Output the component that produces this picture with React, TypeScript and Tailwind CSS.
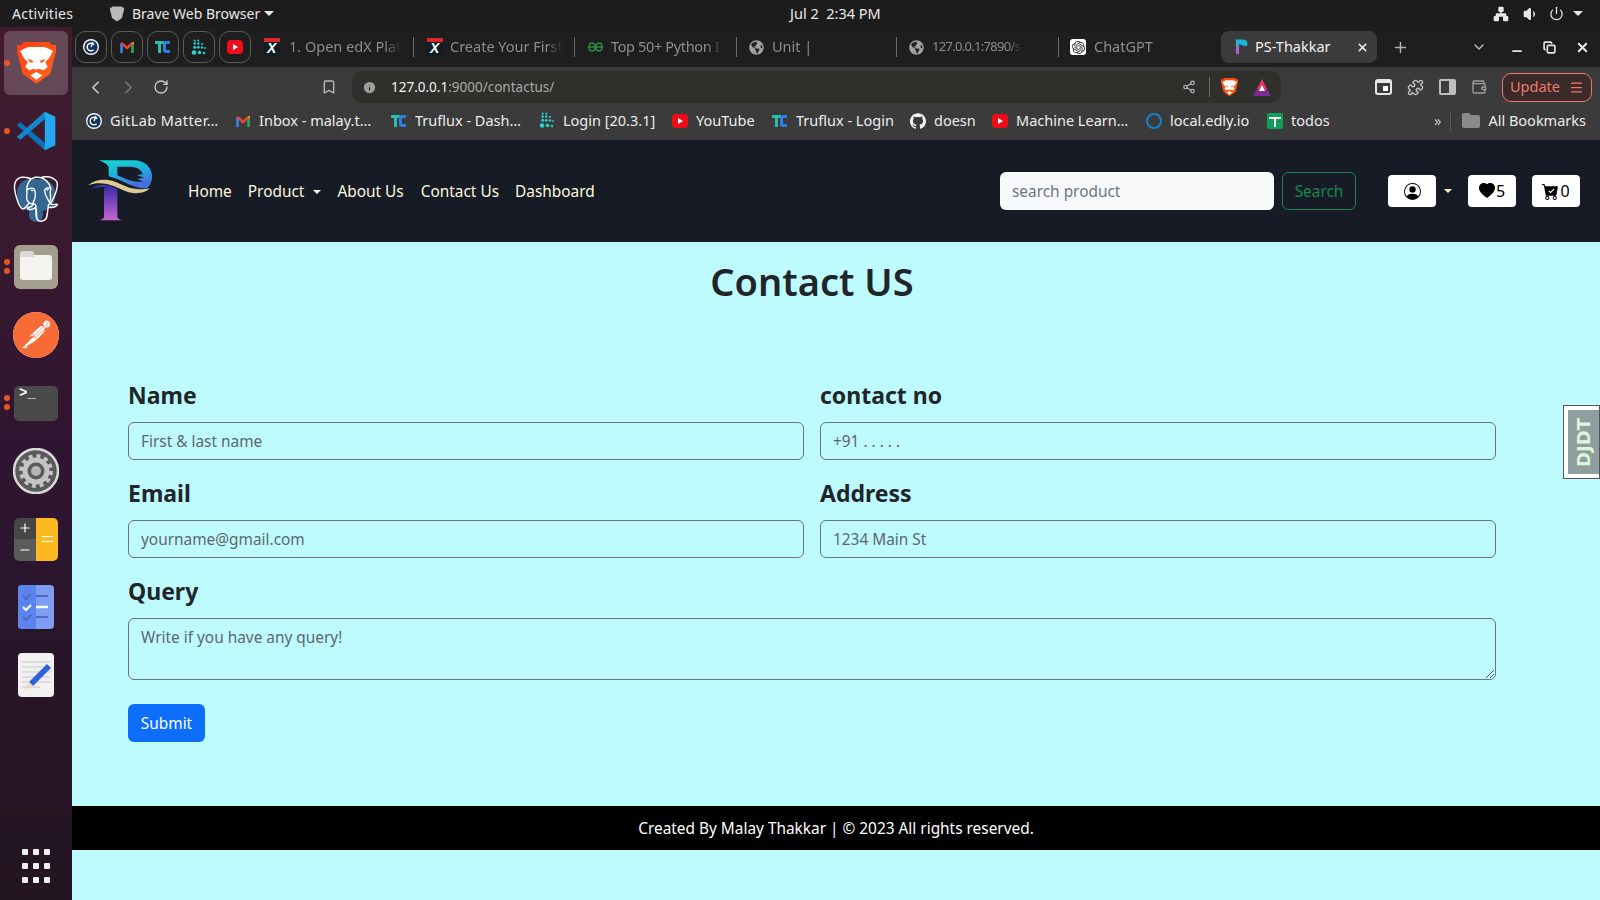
import { ChevronDown, ChevronLeft, ChevronRight, Copy, Minus, Plus, RotateCw, Share2, X, Bookmark, Info, Puzzle, Volume1, Power, Network, Wallet, Menu } from 'lucide-react';
import { SiGithub, SiPostgresql, SiPostman, SiOpenai } from 'react-icons/si';
import { FaGlobeAmericas } from 'react-icons/fa';
import { BsCartCheckFill, BsHeartFill, BsPersonCircle } from 'react-icons/bs';

function BraveMark({ size = 20 }: { size?: number }) {
  return (
    <svg width={size} height={(size * 125) / 117} viewBox="0 0 117 125">
      <defs>
        <linearGradient id="brv" x1="0" y1="0" x2="1" y2="1">
          <stop offset="0" stopColor="#ff3d12" />
          <stop offset="1" stopColor="#ff6a1a" />
        </linearGradient>
      </defs>
      <path d="M20 0H97L105 10 117 8V30L110 55 100 95 58 125 17 95 7 55 0 30V8L12 10Z" fill="url(#brv)" />
      <path d="M18 22L35 15H82L99 22 108 27 95 50 85 60 92 75 80 85 65 80 58 83 51 80 37 85 25 75 32 60 22 50 9 27Z" fill="#fff" />
      <path d="M32 50L48 56 46 63 38 60ZM85 50L69 56 71 63 79 60Z" fill="#ff5a1f" />
      <path d="M40 100L58 90 76 100 58 113Z" fill="#fff" />
    </svg>
  );
}

function VsCodeMark() {
  return (
    <svg width="42" height="42" viewBox="0 0 100 100">
      <path d="M4 36l9-7 60 51-2 16-18-16z" fill="#0a72b8" />
      <path d="M4 64l9 7L73 20 71 4 53 20z" fill="#1685d0" />
      <path d="M71 4l25 12v68L71 96z" fill="#23a9f2" />
    </svg>
  );
}

function PsLogo() {
  return (
    <svg width="66" height="64" viewBox="24 24 198 192">
      <defs>
        <linearGradient id="top" x1="0" y1="0" x2="0.4" y2="1">
          <stop offset="0" stopColor="#12dcd0" />
          <stop offset="0.5" stopColor="#1fb4dc" />
          <stop offset="1" stopColor="#4470e0" />
        </linearGradient>
        <linearGradient id="stem" x1="0" y1="0" x2="0" y2="1">
          <stop offset="0" stopColor="#3c2fa8" />
          <stop offset="1" stopColor="#c766d2" />
        </linearGradient>
      </defs>
      <path d="M57 28H160C195 28 216 50 216 76 216 95 209 106 200 112 175 114 145 100 112 84L86 76V48Q82 38 57 28Z" fill="url(#top)" />
      <path d="M112 47H150C172 47 185 58 188 70L170 72 192 80 172 84 190 92 170 92C150 90 125 80 112 72Z" fill="#161b26" />
      <path d="M72 110C85 108 100 108 112 115V198Q114 205 128 208H57Q70 205 72 198Z" fill="url(#stem)" />
      <path d="M32 114C55 96 85 100 112 114 85 106 60 106 32 114Z" fill="#3a3ab5" />
      <path d="M25 103C45 85 75 82 105 92 130 102 160 122 210 112 195 128 160 132 130 118 100 102 60 88 25 103Z" fill="#dccb92" />
    </svg>
  );
}

function PinnedTab({ children }: { children: React.ReactNode }) {
  return (
    <div className="flex h-8 w-8 items-center justify-center rounded-[10px] border border-[#5a5a5a]">{children}</div>
  );
}

function GitLabFav() {
  return (
    <svg width="16" height="16" viewBox="0 0 16 16">
      <circle cx="8" cy="8" r="8" fill="#f4f6f8" />
      <circle cx="8" cy="8" r="6.6" fill="#15305c" />
      <circle cx="8" cy="8" r="3.8" fill="none" stroke="#fff" strokeWidth="1.5" strokeDasharray="18 6" strokeDashoffset="-3" />
      <path d="M8 8l2-5" stroke="#fff" strokeWidth="1.4" />
    </svg>
  );
}

function GmailFav() {
  return (
    <svg width="14" height="12" viewBox="0 0 14 12" fill="none">
      <path d="M1.5 12V2" stroke="#3b82f6" strokeWidth="2.6" />
      <path d="M12.5 12V2" stroke="#22a95c" strokeWidth="2.6" />
      <path d="M1.5 2L7 7l5.5-5" stroke="#ea4335" strokeWidth="2.6" />
      <path d="M12.5 1.5l1.2 1" stroke="#fbbc05" strokeWidth="2" />
    </svg>
  );
}

function TrufluxFav() {
  return (
    <svg width="16" height="14" viewBox="0 0 16 14">
      <path d="M0 1h9v3H6v9H3V4H0z" fill="#28bfa8" />
      <path d="M15 1v3h-3c-1 0-1 1-1 1v4s0 1 1 1h3v3h-4c-2 0-3-1-3-3V4c0-2 1-3 3-3z" fill="#2f7ee6" />
    </svg>
  );
}

function DotsFav() {
  const dots = [
    [3.7, 1.5, 1.1], [7.3, 1.5, 1.1],
    [3.7, 4.5, 1.3], [7.3, 4.5, 1.2], [11, 5, 1],
    [3.7, 8.3, 1.5], [7.3, 8.3, 1.4], [11, 8.5, 1.2], [14, 9, 0.9],
    [3, 13.5, 2.3], [8.5, 13.5, 1.8], [13, 14, 1.3],
  ];
  return (
    <svg width="16" height="17" viewBox="0 0 16 17">
      {dots.map(([x, y, r]) => <circle key={`${x}-${y}`} cx={x} cy={y} r={r} fill="#22d3d0" />)}
    </svg>
  );
}

function YoutubeFav() {
  return (
    <div className="flex h-[14px] w-4 items-center justify-center rounded-[4px] bg-[#f00c18]">
      <div className="h-0 w-0 border-y-[3px] border-l-[5px] border-y-transparent border-l-white" />
    </div>
  );
}

function EdxFav() {
  return (
    <div className="relative h-[18px] w-[16px] bg-[#0d1f24]">
      <div className="h-1 w-full bg-[#e0262e]" />
      <span className="absolute left-[3px] top-[3px] font-['Liberation_Sans',sans-serif] text-[14px] font-bold italic leading-[15px] text-white">X</span>
    </div>
  );
}

function TabTitle({ w, children }: { w: string; children: React.ReactNode }) {
  return (
    <span className={`overflow-hidden whitespace-nowrap text-[#8d8d8d] [mask-image:linear-gradient(to_right,black_85%,transparent)] ${w}`}>
      {children}
    </span>
  );
}

function TopBar() {
  return (
    <div className="flex h-[27px] items-center bg-[#1c1c1c] text-[14px] text-[#e8e8e8]">
      <span className="ml-3 w-[98px] tracking-[0.3px]">Activities</span>
      <svg width="14" height="16" viewBox="0 0 117 125" className="mr-2">
        <path d="M20 0H97L105 10 117 8V30L110 55 100 95 58 125 17 95 7 55 0 30V8L12 10Z" fill="#b9b9b9" />
      </svg>
      <span className="w-[132px]">Brave Web Browser</span>
      <span className="h-0 w-0 border-x-[5px] border-t-[5px] border-x-transparent border-t-[#e8e8e8]" />
      <span className="ml-[516px] whitespace-pre text-[14.5px]">Jul 2  2:34 PM</span>
      <div className="ml-auto mr-[17px] flex items-center gap-[12px]">
        <Network size={16} fill="#e8e8e8" />
        <Volume1 size={16} fill="#e8e8e8" className="ml-[2px]" />
        <Power size={15} className="-ml-[2px]" />
        <span className="-ml-[3px] h-0 w-0 border-x-[5px] border-t-[5px] border-x-transparent border-t-[#e8e8e8]" />
      </div>
    </div>
  );
}

function Dock() {
  const item = 'relative flex h-[68px] items-center justify-center';
  const dot = 'absolute left-[4px] h-[6px] w-[6px] rounded-full bg-[#e95420]';
  return (
    <div className="flex h-full w-[72px] shrink-0 flex-col bg-gradient-to-b from-[#421c2d] via-[#2e1531] to-[#231520] pt-[2px]">
      <div className={item}>
        <div className="flex h-[64px] w-[64px] items-center justify-center rounded-[6px] bg-white/20"><BraveMark size={39} /></div>
        <span className={`${dot} top-[31px]`} />
      </div>
      <div className={item}>
        <VsCodeMark />
        <span className={`${dot} top-[31px]`} />
      </div>
      <div className={item}>
        <div className="relative flex h-[46px] w-[46px] items-center justify-center">
          <div className="absolute left-[4px] top-[3px] h-[32px] w-[38px] rounded-[14px] bg-[#336791]" />
          <div className="absolute left-[16px] top-[24px] h-[22px] w-[14px] rounded-b-[7px] bg-[#336791]" />
          <SiPostgresql size={46} color="#fff" className="relative" />
        </div>
      </div>
      <div className={item}>
        <div className="flex h-[44px] w-[44px] items-center justify-center rounded-[6px] bg-[#a39e8d]">
          <div className="relative h-[25px] w-[32px] rounded-[3px] bg-[#f5f3f0] before:absolute before:-top-[4px] before:left-0 before:h-[6px] before:w-[14px] before:rounded-t-[3px] before:bg-[#ddd9d2]" />
        </div>
        <span className={`${dot} top-[26px]`} />
        <span className={`${dot} top-[35px]`} />
      </div>
      <div className={item}>
        <div className="flex h-[46px] w-[46px] items-center justify-center rounded-full bg-white">
          <SiPostman size={46} color="#f76b36" />
        </div>
      </div>
      <div className={item}>
        <div className="h-[35px] w-[44px] rounded-[5px] bg-[#4a4a4a] pl-[5px] font-['Liberation_Mono',monospace] text-[14px] font-bold leading-[14px] text-white">&gt;_</div>
        <span className={`${dot} top-[26px]`} />
        <span className={`${dot} top-[35px]`} />
      </div>
      <div className={item}>
        <svg width="46" height="46" viewBox="0 0 46 46">
          <circle cx="23" cy="23" r="22" fill="#5a5a5a" stroke="#d9d9d9" strokeWidth="2.5" />
          <circle cx="23" cy="23" r="11" fill="none" stroke="#c4c4c4" strokeWidth="5" />
          <circle cx="23" cy="23" r="15" fill="none" stroke="#c4c4c4" strokeWidth="4" strokeDasharray="4 3.85" />
          <circle cx="23" cy="23" r="5" fill="#b5b5b5" />
        </svg>
      </div>
      <div className={item}>
        <div className="grid h-[43px] w-[44px] grid-cols-2 grid-rows-2 overflow-hidden rounded-[5px]">
          <div className="flex items-center justify-center bg-[#464646]"><Plus size={14} color="#fff" /></div>
          <div className="row-span-2 flex flex-col items-center justify-center gap-[4px] bg-[#fdb921]">
            <div className="h-px w-[11px] bg-white" />
            <div className="h-px w-[11px] bg-white" />
          </div>
          <div className="flex items-center justify-center bg-[#5a5a5a]"><Minus size={14} color="#fff" /></div>
        </div>
      </div>
      <div className={item}>
        <svg width="36" height="44" viewBox="0 0 36 44">
          <rect width="36" height="44" rx="4" fill="#7e9ef5" />
          <path d="M0 4a4 4 0 0 1 4-4h14v44H4a4 4 0 0 1-4-4z" fill="#5b84ef" />
          <path d="M5 11l3 3 5-5M5 32l3 3 5-5" stroke="#4a6cc4" strokeWidth="2" fill="none" />
          <path d="M5 22l3 3 5-5" stroke="#fff" strokeWidth="2" fill="none" />
          <path d="M18 11h12M18 32h12" stroke="#4a6cc4" strokeWidth="2" />
          <path d="M18 22h12" stroke="#fff" strokeWidth="2.4" />
        </svg>
      </div>
      <div className={item}>
        <svg width="36" height="44" viewBox="0 0 36 44">
          <rect width="36" height="44" rx="4" fill="#f1f1f1" />
          <path d="M4 9h28M4 14h28M4 19h28M4 24h28M4 29h28M4 34h18" stroke="#c9c9c9" />
          <path d="M11 29L29 11l4 4-18 18z" fill="#2d62d9" />
          <path d="M11 29l4 4-8 4z" fill="#f5d9b8" />
        </svg>
      </div>
      <div className="mt-auto mb-[17px] grid w-full grid-cols-3 justify-items-center gap-y-[8px] px-[20px]">
        {Array.from({ length: 9 }).map((_, i) => (
          <span key={i} className="h-[6px] w-[6px] rounded-[1px] bg-[#f0f0f0]" />
        ))}
      </div>
    </div>
  );
}

function TabStrip() {
  return (
    <div className="flex h-[40px] items-center bg-[#1e1e1e] pl-[3px] text-[14.5px]">
      <div className="flex gap-[4px]">
        <PinnedTab><GitLabFav /></PinnedTab>
        <PinnedTab><GmailFav /></PinnedTab>
        <PinnedTab><TrufluxFav /></PinnedTab>
        <PinnedTab><DotsFav /></PinnedTab>
        <PinnedTab><YoutubeFav /></PinnedTab>
      </div>
      <div className="ml-[10px] flex h-5 w-[153px] items-center gap-[9px] border-r border-[#6a6a6a] pl-[3px]">
        <EdxFav />
        <TabTitle w="w-[112px]">1. Open edX Plat</TabTitle>
      </div>
      <div className="flex h-5 w-[161px] items-center gap-[7px] border-r border-[#6a6a6a] pl-[13px]">
        <EdxFav />
        <TabTitle w="w-[113px]">Create Your First</TabTitle>
      </div>
      <div className="flex h-5 w-[162px] items-center gap-[8px] border-r border-[#6a6a6a] pl-[13px]">
        <svg width="15" height="10" viewBox="0 0 15 10" fill="none" stroke="#2f8d46" strokeWidth="1.4">
          <path d="M0 5h15M7.5 5C7 2 5 1 3.5 1 2 1 1 2.5 1 5s1.5 4 3 4 3-1.5 3.5-4zM7.5 5C8 2 10 1 11.500 1 13 1 14 2.500 14 5s-1.500 4-3 4-3-1.500-3.500-4z" />
        </svg>
        <TabTitle w="w-[112px] tracking-[-0.35px]">Top 50+ Python I</TabTitle>
      </div>
      <div className="flex h-5 w-[160px] items-center gap-[8px] border-r border-[#6a6a6a] pl-[12px]">
        <FaGlobeAmericas size={15} color="#a0a0a0" />
        <TabTitle w="w-[100px]">Unit |</TabTitle>
      </div>
      <div className="flex h-5 w-[162px] items-center gap-[8px] border-r border-[#6a6a6a] pl-[12px]">
        <FaGlobeAmericas size={15} color="#a0a0a0" />
        <TabTitle w="w-[90px] text-[13px] tracking-[-0.7px]">127.0.0.1:7890/sc</TabTitle>
      </div>
      <div className="flex h-5 w-[162px] items-center gap-[8px] pl-[11px]">
        <div className="flex h-[16px] w-[16px] items-center justify-center rounded-[3px] bg-white"><SiOpenai size={13} color="#333" /></div>
        <TabTitle w="w-[100px]">ChatGPT</TabTitle>
      </div>
      <div className="flex h-8 w-[156px] items-center rounded-[8px] bg-[#3b3b3b] pl-[11px] pr-[8px] text-[#f0f0f0]">
        <svg width="16" height="16" viewBox="24 24 198 192" className="mr-[7px]">
          <path d="M57 28H160C195 28 216 50 216 76 216 95 209 106 200 112 175 114 145 100 112 84V120H72V48Q82 38 57 28Z" fill="#1fb4dc" />
          <path d="M72 110H112V208H72Z" fill="#b05fd0" />
        </svg>
        PS-Thakkar
        <X size={13} strokeWidth={3} className="ml-auto" color="#ededed" />
      </div>
      <Plus size={17} color="#b5b5b5" className="ml-[15px]" />
      <ChevronDown size={16} color="#c5c5c5" className="ml-[62px]" />
      <Minus size={14} strokeWidth={3} color="#e5e5e5" className="ml-[23px] mt-[8px]" />
      <Copy size={13} strokeWidth={3} color="#e5e5e5" className="ml-[19px]" />
      <X size={15} strokeWidth={3} color="#efefef" className="ml-[19px]" />
    </div>
  );
}

function Toolbar() {
  return (
    <div className="flex h-[38px] items-center bg-[#3b3b3b] pt-[2px]">
      <ChevronLeft size={21} color="#c9c9c9" className="ml-[13px]" />
      <ChevronRight size={21} color="#777" className="ml-[12px]" />
      <RotateCw size={16} color="#c9c9c9" className="ml-[14px]" />
      <Bookmark size={16} color="#b9b9b9" className="ml-[152px]" />
      <div className="ml-[15px] flex h-[32px] w-[929px] items-center rounded-[10px] bg-[#2f2f2c] text-[13.5px]">
        <Info size={15} fill="#a0a0a0" color="#2f2f2c" className="ml-[10px]" />
        <span className="ml-[14px] text-[#f2f2f2]">127.0.0.1<span className="text-[#a9a9a9]">:9000/contactus/</span></span>
        <Share2 size={14} color="#b9b9b9" className="ml-auto" />
        <div className="ml-[13px] h-5 w-px bg-[#6a6a6a]" />
        <div className="ml-[11px]"><BraveMark size={17} /></div>
        <svg width="18" height="17" viewBox="0 0 18 17" className="ml-[15px] mr-[10px]">
          <path d="M9 0l9 17H0z" fill="#7a2d8e" />
          <path d="M9 0l5 10H4z" fill="#ea3355" />
          <path d="M9 6l3 6H6z" fill="#fff" />
        </svg>
      </div>
      <div className="ml-[94px] flex items-center gap-[15px]">
        <div className="flex h-[16px] w-[17px] items-end justify-end rounded-[3px] border-2 border-t-[4px] border-[#e6e6e6] p-[2px]"><span className="h-[5px] w-[5px] bg-white" /></div>
        <Puzzle size={17} color="#bdbdbd" />
        <div className="flex h-[16px] w-[17px] justify-end rounded-[2px] border-2 border-[#bdbdbd]"><span className="h-full w-[5px] bg-[#bdbdbd]" /></div>
        <Wallet size={16} color="#9d9d9d" />
      </div>
      <div className="ml-[15px] flex h-[29px] w-[90px] items-center justify-center gap-[9px] rounded-[9px] border border-[#ee7a6e] bg-[#3a2a28] text-[14.5px] text-[#ec7b6e]">
        Update
        <Menu size={15} />
      </div>
    </div>
  );
}

function BookmarkBar() {
  const t = 'ml-[8px] overflow-hidden whitespace-nowrap';
  return (
    <div className="flex h-[35px] items-center bg-[#3b3b3b] pb-[4px] pl-[14px] text-[14.5px] text-[#ececec]">
      <div className="flex w-[150px] items-center"><GitLabFav /><span className={`${t} tracking-[0.4px]`}>GitLab Matter…</span></div>
      <div className="flex w-[155px] items-center"><GmailFav /><span className="ml-[9px] whitespace-nowrap">Inbox - malay.t…</span></div>
      <div className="flex w-[148px] items-center"><TrufluxFav /><span className={t}>Truflux - Dash…</span></div>
      <div className="flex w-[133px] items-center"><DotsFav /><span className={t}>Login [20.3.1]</span></div>
      <div className="flex w-[100px] items-center"><YoutubeFav /><span className={t}>YouTube</span></div>
      <div className="flex w-[138px] items-center"><TrufluxFav /><span className={t}>Truflux - Login</span></div>
      <div className="flex w-[82px] items-center"><SiGithub size={16} color="#f5f5f5" /><span className={t}>doesn</span></div>
      <div className="flex w-[154px] items-center"><YoutubeFav /><span className={t}>Machine Learn…</span></div>
      <div className="flex w-[121px] items-center">
        <span className="h-4 w-4 rounded-full border-[2.5px] border-[#0a86c8]" />
        <span className={t}>local.edly.io</span>
      </div>
      <div className="flex w-[80px] items-center">
        <div className="relative h-4 w-4 rounded-[2px] bg-[#0f9d58]">
          <span className="absolute left-[2px] top-[4px] h-[2px] w-[12px] bg-white" />
          <span className="absolute left-[7px] top-[4px] h-[10px] w-[2px] bg-white" />
        </div>
        <span className={t}>todos</span>
      </div>
      <span className="ml-[87px] text-[#c5c5c5]">»</span>
      <div className="ml-[9px] h-5 w-px bg-[#5a5a5a]" />
      <svg width="18" height="15" viewBox="0 0 18 15" className="ml-[11px]"><path d="M0 2a2 2 0 0 1 2-2h5l2 2h7a2 2 0 0 1 2 2v9a2 2 0 0 1-2 2H2a2 2 0 0 1-2-2z" fill="#8a8a8a" /></svg>
      <span className="ml-[8px] whitespace-nowrap">All Bookmarks</span>
    </div>
  );
}

function Navbar() {
  return (
    <nav className="flex h-[102px] items-center bg-[#161b26] pl-[16px] text-[15.4px] text-[#fff8dc]">
      <PsLogo />
      <div className="ml-[34px] flex items-center gap-4 pt-[2px]">
        <span>Home</span>
        <span className="flex items-center gap-[9px]">Product<span className="h-0 w-0 border-x-[4px] border-t-[4px] border-x-transparent border-t-[#fff8dc]" /></span>
        <span>About Us</span>
        <span className="ml-[1px]">Contact Us</span>
        <span>Dashboard</span>
      </div>
      <div className="ml-auto flex items-center">
        <div className="flex h-[38px] w-[274px] items-center rounded-[6px] bg-[#f8f9fa] pl-3 pt-px text-[#6c757d]">search product</div>
        <div className="ml-2 flex h-[38px] w-[74px] items-center justify-center rounded-[6px] border border-[#198754] pt-px text-[#198754]">Search</div>
        <div className="ml-8 flex h-8 w-12 items-center justify-center rounded-[4px] bg-white text-black"><BsPersonCircle size={17} /></div>
        <span className="ml-[8px] h-0 w-0 border-x-[4px] border-t-[4px] border-x-transparent border-t-[#fff8dc]" />
        <div className="ml-[16px] flex h-8 w-12 items-center justify-center gap-px rounded-[4px] bg-white text-[16px] text-black"><BsHeartFill size={16} />5</div>
        <div className="ml-4 mr-[20px] flex h-8 w-12 items-center justify-center gap-px rounded-[4px] bg-white text-[16px] text-black"><BsCartCheckFill size={17} />0</div>
      </div>
    </nav>
  );
}

function Field({ label, placeholder }: { label: string; placeholder: string }) {
  return (
    <div>
      <label className="block h-[30px] text-[23px] font-bold leading-[30px] text-[#212529]">{label}</label>
      <div className="mt-[12px] flex h-[38px] items-center rounded-[6px] border border-[#6e7378] px-3 pt-px text-[15.4px] text-[#5f666c]">{placeholder}</div>
    </div>
  );
}

export default function App() {
  return (
    <div className="flex h-[900px] w-[1600px] flex-col overflow-hidden font-['Noto_Sans',sans-serif]">
      <TopBar />
      <div className="flex min-h-0 flex-1">
        <Dock />
        <div className="relative flex min-w-0 flex-1 flex-col bg-[#bdfbff]">
          <TabStrip />
          <Toolbar />
          <BookmarkBar />
          <Navbar />
          <h1 className="mt-[15px] pr-[48px] text-center text-[38px] font-semibold leading-[48px] text-[#212529]">Contact US</h1>
          <form className="mt-[75px] pl-[56px] pr-[104px]">
            <div className="grid grid-cols-2 gap-x-4 gap-y-[18px]">
              <Field label="Name" placeholder="First & last name" />
              <Field label="contact no" placeholder="+91 . . . . ." />
              <Field label="Email" placeholder="yourname@gmail.com" />
              <Field label="Address" placeholder="1234 Main St" />
            </div>
            <label className="mt-[18px] block h-[30px] text-[23px] font-bold leading-[30px] text-[#212529]">Query</label>
            <div className="relative mt-[12px] h-[62px] rounded-[6px] border border-[#6e7378] px-3 pt-[7px] text-[15.4px] text-[#5f666c]">
              Write if you have any query!
              <svg width="8" height="8" viewBox="0 0 8 8" className="absolute bottom-[1px] right-[1px]"><path d="M8 0L0 8M8 4L4 8" stroke="#555" /></svg>
            </div>
            <button type="button" className="mt-[24px] flex h-[38px] w-[77px] items-center justify-center rounded-[6px] bg-[#0d6efd] pt-px text-[15.4px] text-white">Submit</button>
          </form>
          <footer className="mt-[64px] flex h-[44px] items-center justify-center bg-black pt-px text-[15.4px] text-white">
            Created By Malay Thakkar | © 2023 All rights reserved.
          </footer>
          <div className="absolute right-0 top-[378px] border border-[#555] bg-white p-[4px] pr-0">
            <div className="flex h-[64px] w-[31px] items-center justify-center bg-[#8f9f9f]">
              <span className="-rotate-90 font-['DejaVu_Sans',sans-serif] text-[18px] font-bold text-[#dff6d8]">DJDT</span>
            </div>
          </div>
        </div>
      </div>
    </div>
  );
}
